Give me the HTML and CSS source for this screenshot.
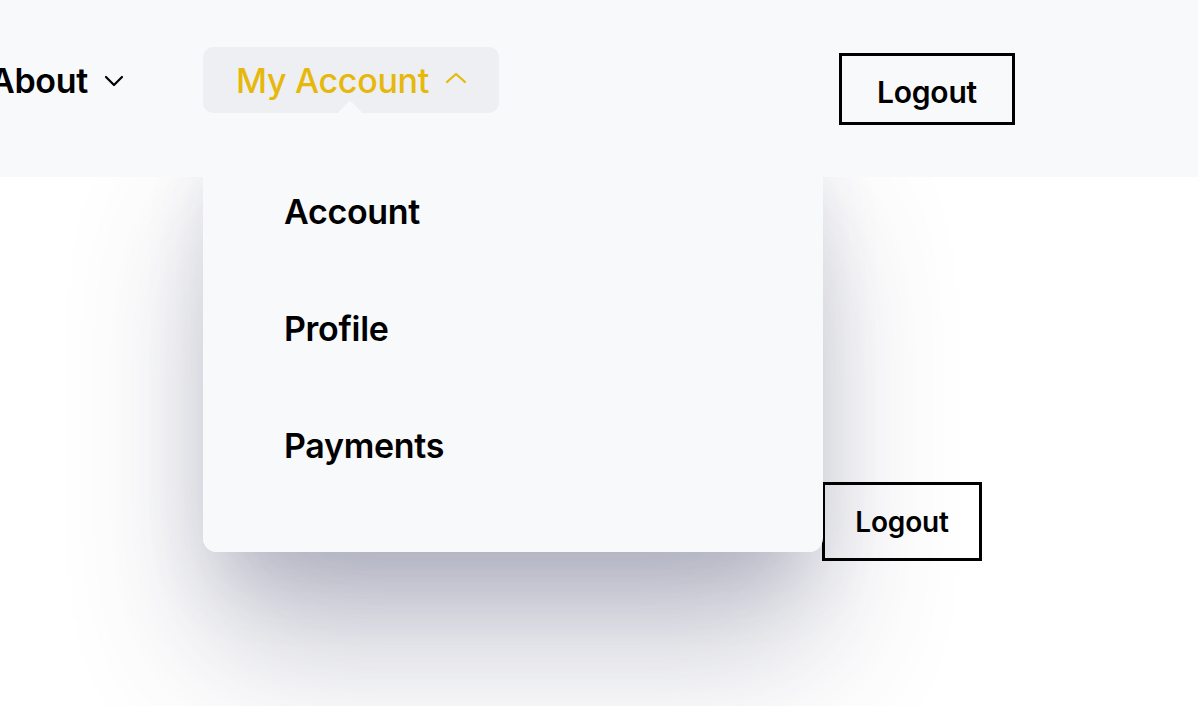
FILE: index.html
```html
<!DOCTYPE html>
<html lang="en">
<head>
    <meta charset="UTF-8">
    <meta name="viewport" content="width=device-width, initial-scale=1.0">
    <title>Account Menu</title>
    <link rel="stylesheet" href="styles.css">
</head>
<body>
    <header class="topbar">
        <nav class="nav">
            <div class="nav-item">
                <span>About</span>
                <svg class="chevron" width="20" height="12" viewBox="0 0 20 12" fill="none" stroke="currentColor" stroke-width="2.2" stroke-linecap="round" stroke-linejoin="round"><path d="M2 2l8 8 8-8"/></svg>
            </div>

            <div class="nav-item account open">
                <span>My Account</span>
                <svg class="chevron" width="22" height="12" viewBox="0 0 22 12" fill="none" stroke="currentColor" stroke-width="2.2" stroke-linecap="round" stroke-linejoin="round"><path d="M2 10l9-8 9 8"/></svg>

                <!-- dropdown panel -->
                <div class="dropdown">
                    <a href="#" class="dropdown-link">Account</a>
                    <a href="#" class="dropdown-link">Profile</a>
                    <a href="#" class="dropdown-link">Payments</a>
                </div>
            </div>

            <button class="logout">Logout</button>
        </nav>
    </header>

    <main class="content">
        <button class="logout logout-small">Logout</button>
    </main>
</body>
</html>
```

FILE: styles.css
```css
html {
    overflow: hidden;
}

body {
    font-family: 'Inter', 'Noto Sans', sans-serif;
    background-color: #fff;
    color: #000;
    margin: 0;
    min-height: 706px;
}

.topbar {
    background-color: #f8f9fb;
    height: 177px;
}

.nav {
    display: flex;
    align-items: flex-start;
    padding-top: 47px;
}

.nav-item {
    display: flex;
    align-items: center;
    gap: 16px;
    height: 66px;
    font-size: 34px;
    font-weight: 600;
    letter-spacing: -0.3px;
    margin-left: -10px;
}

.nav-item .chevron {
    margin-top: 2px;
}

.account {
    position: relative;
    margin-left: 79px;
    width: 296px;
    box-sizing: border-box;
    padding-left: 33px;
    color: #e5b80b;
    font-weight: 500;
    background-color: #eeeff2;
    border-radius: 10px;
}

.account.open .chevron {
    margin-top: -4px;
}

.dropdown {
    position: absolute;
    top: 66px;
    left: 0;
    width: 620px;
    height: 439px;
    box-sizing: border-box;
    padding: 78px 0 0 81px;
    background-color: #f8f9fb;
    border-radius: 0 14px 14px 14px;
    display: flex;
    flex-direction: column;
    gap: 76px;
}

/* small notch under the button */
.dropdown::after {
    content: "";
    position: absolute;
    top: -9px;
    left: 138px;
    width: 18px;
    height: 18px;
    background-color: #f8f9fb;
    border-radius: 3px;
    transform: rotate(45deg);
}

/* shadow sits below the header band */
.dropdown::before {
    content: "";
    position: absolute;
    inset: 0;
    z-index: -1;
    border-radius: 14px;
    box-shadow: 0 100px 140px -10px rgba(60, 62, 100, 0.3),
                0 40px 70px -20px rgba(60, 62, 100, 0.2);
}

.dropdown-link {
    color: #000;
    text-decoration: none;
    font-size: 34px;
    font-weight: 600;
    letter-spacing: -0.3px;
    line-height: 41px;
}

.logout {
    font-family: inherit;
    margin-left: 340px;
    margin-top: 6px;
    width: 176px;
    height: 72px;
    border: 3px solid #000;
    background: transparent;
    color: #000;
    font-size: 30px;
    font-weight: 600;
    letter-spacing: -0.2px;
    padding: 6px 0 0;
    cursor: pointer;
}

.content {
    display: flex;
    padding: 305px 0 0 822px;
}

.logout-small {
    margin: 0;
    width: 160px;
    height: 79px;
    font-size: 28px;
    padding: 0;
}
```
